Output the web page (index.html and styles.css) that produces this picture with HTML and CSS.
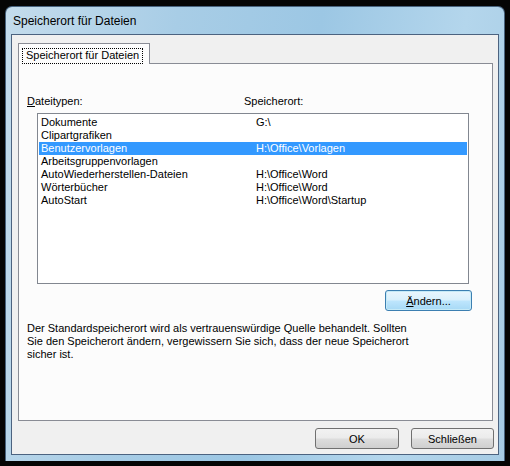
FILE: index.html
```html
<!DOCTYPE html>
<html>
<head>
    <meta charset="utf-8">
    <link rel="stylesheet" href="styles.css">
</head>
<body>

<div class="window">
    <div class="titlebar">Speicherort für Dateien</div>
    <div class="client">
        <div class="tabs">
            <div class="tab active"><span class="focus">Speicherort für Dateien</span></div>
        </div>
        <div class="panel">
            <div class="heads">
                <span><u>D</u>ateitypen:</span>
                <span>Speicherort:</span>
            </div>
            <div class="listbox">
                <div class="item"><span>Dokumente</span><span>G:\</span></div>
                <div class="item"><span>Clipartgrafiken</span><span></span></div>
                <div class="item selected"><span>Benutzervorlagen</span><span>H:\Office\Vorlagen</span></div>
                <div class="item"><span>Arbeitsgruppenvorlagen</span><span></span></div>
                <div class="item"><span>AutoWiederherstellen-Dateien</span><span>H:\Office\Word</span></div>
                <div class="item"><span>Wörterbücher</span><span>H:\Office\Word</span></div>
                <div class="item"><span>AutoStart</span><span>H:\Office\Word\Startup</span></div>
            </div>
            <div class="row-right">
                <button class="btn hot"><u>Ä</u>ndern...</button>
            </div>
            <p class="note">Der Standardspeicherort wird als vertrauenswürdige Quelle behandelt. Sollten Sie den Speicherort ändern, vergewissern Sie sich, dass der neue Speicherort sicher ist.</p>
        </div>
        <div class="footer">
            <button class="btn ok">OK</button>
            <button class="btn">Schließen</button>
        </div>
    </div>
</div>

</body>
</html>
```

FILE: styles.css
```css
* {
  box-sizing: border-box;
}
body {
  margin: 0;
  background: #050505;
  font-family: "Liberation Sans", Arial, sans-serif;
  font-size: 11px;
  color: #000;
}

.window {
  margin: 6px 5px 0 5px;
  width: 500px;
  height: 455px;
  border-radius: 7px 7px 0 0;
  background: linear-gradient(100deg, #c4dcec 0%, #a8cde6 30%, #9cc7e4 55%, #b4d6ec 80%, #a6cbe4 100%);
  border: 1px solid #48637e;
  border-bottom: none;
  padding: 0 5px 6px 5px;
}

.titlebar {
  height: 27px;
  padding: 7px 0 0 2px;
  font-size: 12px;
  color: #000;
}

.client {
  height: 421px;
  border: 1px solid #4c6380;
  background: #f0f0f0;
  padding: 8px 5px 0 6px;
  display: flex;
  flex-direction: column;
}

.tabs {
  display: flex;
  height: 20px;
  position: relative;
  z-index: 1;
}
.tab {
  width: 132px;
  height: 21px;
  border: 1px solid #898c95;
  border-bottom: none;
  background: #fcfcfc;
  padding: 4px 0 0 3px;
}
.tab .focus {
  display: inline-block;
  border: 1px dotted #000;
  padding: 0 3px 1px 3px;
  line-height: 13px;
}

.panel {
  width: 475px;
  height: 358px;
  border: 1px solid #898c95;
  background: #fcfcfc;
  padding: 31px 22px 0 8px;
}

.heads {
  display: grid;
  grid-template-columns: 217px 1fr;
  line-height: 13px;
  margin-bottom: 5px;
}

.listbox {
  margin-left: 10px;
  width: 432px;
  height: 171px;
  border: 1px solid #828790;
  background: #fff;
  padding: 2px 1px;
}
.item {
  display: grid;
  grid-template-columns: 215px 1fr;
  height: 13px;
  line-height: 13px;
  padding-left: 2px;
}
.item.selected {
  background: #3399ff;
  color: #fff;
}

.row-right {
  display: flex;
  justify-content: flex-end;
  margin-top: 6px;
  margin-right: -2px;
}

.btn {
  font-family: inherit;
  font-size: 11px;
  width: 87px;
  height: 21px;
  padding: 0;
  border: 1px solid #707070;
  border-radius: 3px;
  background: linear-gradient(#f2f2f2 0%, #ebebeb 48%, #dddddd 52%, #cfcfcf 100%);
  color: #000;
}
.btn.hot {
  border-color: #3c7fb1;
  background: linear-gradient(#eaf6fd 0%, #d9f0fc 48%, #bee6fd 52%, #a7d9f5 100%);
  box-shadow: inset 0 0 0 1px #c6eaf7;
}

.note {
  margin: 11px 0 0 0;
  line-height: 13px;
  width: 385px;
}

.footer {
  display: flex;
  justify-content: flex-end;
  gap: 12px;
  margin-top: 7px;
  margin-right: -1px;
}
.footer .btn {
  width: 83px;
}
.footer .btn.ok {
  width: 84px;
}
```
